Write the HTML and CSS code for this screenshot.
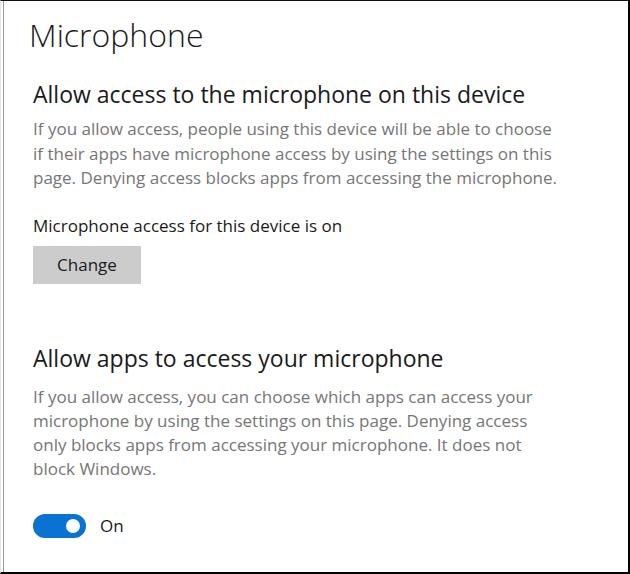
FILE: index.html
```html
<!DOCTYPE html>
<html lang="en">
<head>
    <meta charset="UTF-8">
    <meta name="viewport" content="width=device-width, initial-scale=1.0">
    <title>Microphone</title>
    <link rel="stylesheet" href="styles.css">
</head>
<body>
<div class="page">
    <h1 class="title">Microphone</h1>

    <!-- device access -->
    <div class="section">
        <h2 class="heading">Allow access to the microphone on this device</h2>
        <p class="desc">If you allow access, people using this device will be able to choose if their apps have microphone access by using the settings on this page. Denying access blocks apps from accessing the microphone.</p>
        <p class="status">Microphone access for this device is on</p>
        <button class="btn">Change</button>
    </div>

    <!-- app access -->
    <div class="section second">
        <h2 class="heading">Allow apps to access your microphone</h2>
        <p class="desc">If you allow access, you can choose which apps can access your microphone by using the settings on this page. Denying access only blocks apps from accessing your microphone. It does not block Windows.</p>
        <div class="toggle-row">
            <span class="toggle"><span class="knob"></span></span>
            <span class="toggle-label">On</span>
        </div>
    </div>
</div>
</body>
</html>
```

FILE: styles.css
```css
html, body {
    margin: 0;
    padding: 0;
    background: #fff;
}
.page {
    box-sizing: border-box;
    width: 630px;
    height: 574px;
    border-top: 1px solid #111;
    border-right: 2px solid #000;
    border-bottom: 2px solid #000;
    border-left: 1px solid #e4e4e4;
    box-shadow: inset 2px 0 0 #fff, inset 3px 0 0 #9a9a9a;
    padding: 0 0 0 32px;
    font-family: "Open Sans", "Noto Sans", sans-serif;
    color: #1a1a1a;
}
.title {
    margin: 0 0 0 -4px;
    padding-top: 12px;
    font-size: 32px;
    font-weight: 300;
    line-height: 44px;
}
.heading {
    margin: 0;
    font-size: 23px;
    font-weight: 400;
    line-height: 30px;
}
.section {
    padding-top: 22px;
}
.section.second {
    padding-top: 59px;
}
.desc {
    margin: 8px 0 0;
    width: 528px;
    font-size: 17px;
    line-height: 24.5px;
    color: #767676;
}
.second .desc {
    margin-top: 12px;
    line-height: 24px;
}
.status {
    margin: 23px 0 0;
    font-size: 17px;
    line-height: 24px;
    color: #1a1a1a;
}
.btn {
    display: block;
    margin-top: 8px;
    width: 108px;
    height: 38px;
    border: none;
    background-color: #cccccc;
    font-family: inherit;
    font-size: 17px;
    color: #1a1a1a;
    padding: 0;
}
.toggle-row {
    display: flex;
    align-items: center;
    margin-top: 33px;
    gap: 14px;
}
.toggle {
    position: relative;
    display: inline-block;
    width: 53px;
    height: 24px;
    border-radius: 12px;
    background-color: #0a72d3;
}
.knob {
    position: absolute;
    top: 5px;
    right: 6px;
    width: 14px;
    height: 14px;
    border-radius: 50%;
    background: #fff;
}
.toggle-label {
    font-size: 17px;
    line-height: 24px;
    color: #1a1a1a;
}
```
